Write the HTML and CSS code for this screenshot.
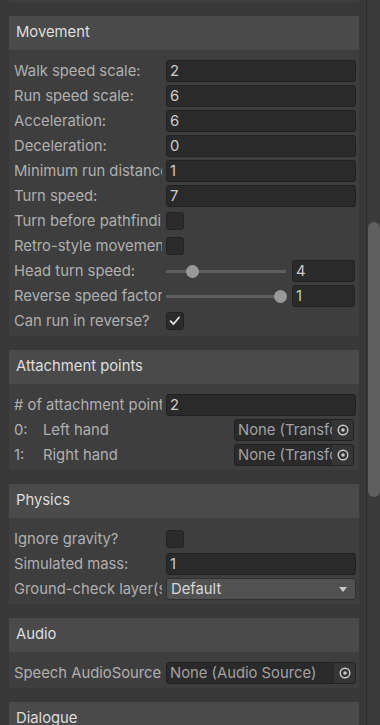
FILE: index.html
```html
<!DOCTYPE html>
<html lang="en">
<head>
    <meta charset="UTF-8">
    <meta name="viewport" content="width=device-width, initial-scale=1.0">
    <title>Character Inspector</title>
    <link rel="stylesheet" href="styles.css">
</head>
<body>
    <div class="window">
        <div class="inspector">
            <div class="panel-tail"></div>

            <div class="section">
                <div class="section-header">Movement</div>
                <div class="section-body">
                    <div class="row"><span class="label">Walk speed scale:</span><span class="field">2</span></div>
                    <div class="row"><span class="label">Run speed scale:</span><span class="field">6</span></div>
                    <div class="row"><span class="label">Acceleration:</span><span class="field">6</span></div>
                    <div class="row"><span class="label">Deceleration:</span><span class="field">0</span></div>
                    <div class="row"><span class="label">Minimum run distance:</span><span class="field">1</span></div>
                    <div class="row"><span class="label">Turn speed:</span><span class="field">7</span></div>
                    <div class="row"><span class="label">Turn before pathfinding?</span><span class="checkbox"></span></div>
                    <div class="row"><span class="label">Retro-style movement?</span><span class="checkbox"></span></div>
                    <div class="row">
                        <span class="label">Head turn speed:</span>
                        <div class="slider-wrap">
                            <div class="slider"><span class="knob" style="left: 22%"></span></div>
                            <span class="field small">4</span>
                        </div>
                    </div>
                    <div class="row">
                        <span class="label">Reverse speed factor:</span>
                        <div class="slider-wrap">
                            <div class="slider"><span class="knob" style="left: 95%"></span></div>
                            <span class="field small">1</span>
                        </div>
                    </div>
                    <div class="row">
                        <span class="label">Can run in reverse?</span>
                        <span class="checkbox checked">
                            <svg width="18" height="18" viewBox="0 0 18 18"><path d="M4.5 9.2 L7.5 12 L13 5.5" fill="none" stroke="#e6e6e6" stroke-width="1.8" stroke-linecap="round" stroke-linejoin="round"/></svg>
                        </span>
                    </div>
                </div>
            </div>

            <div class="section">
                <div class="section-header">Attachment points</div>
                <div class="section-body">
                    <div class="row"><span class="label"># of attachment points:</span><span class="field">2</span></div>
                    <div class="row point-row">
                        <span class="index">0:</span>
                        <span class="point-name">Left hand</span>
                        <span class="object-field narrow">
                            <span class="object-text">None (Transform)</span>
                            <span class="picker"><svg width="12" height="12" viewBox="0 0 12 12"><circle cx="6" cy="6" r="4.8" fill="none" stroke="#c8c8c8" stroke-width="1.4"/><circle cx="6" cy="6" r="1.8" fill="#c8c8c8"/></svg></span>
                        </span>
                    </div>
                    <div class="row point-row">
                        <span class="index">1:</span>
                        <span class="point-name">Right hand</span>
                        <span class="object-field narrow">
                            <span class="object-text">None (Transform)</span>
                            <span class="picker"><svg width="12" height="12" viewBox="0 0 12 12"><circle cx="6" cy="6" r="4.8" fill="none" stroke="#c8c8c8" stroke-width="1.4"/><circle cx="6" cy="6" r="1.8" fill="#c8c8c8"/></svg></span>
                        </span>
                    </div>
                </div>
            </div>

            <div class="section">
                <div class="section-header">Physics</div>
                <div class="section-body">
                    <div class="row"><span class="label">Ignore gravity?</span><span class="checkbox"></span></div>
                    <div class="row"><span class="label">Simulated mass:</span><span class="field">1</span></div>
                    <div class="row">
                        <span class="label">Ground-check layer(s):</span>
                        <span class="dropdown">Default<span class="arrow"></span></span>
                    </div>
                </div>
            </div>

            <div class="section">
                <div class="section-header">Audio</div>
                <div class="section-body">
                    <div class="row">
                        <span class="label">Speech AudioSource:</span>
                        <span class="object-field">
                            <span class="object-text">None (Audio Source)</span>
                            <span class="picker"><svg width="12" height="12" viewBox="0 0 12 12"><circle cx="6" cy="6" r="4.8" fill="none" stroke="#c8c8c8" stroke-width="1.4"/><circle cx="6" cy="6" r="1.8" fill="#c8c8c8"/></svg></span>
                        </span>
                    </div>
                </div>
            </div>

            <div class="section">
                <div class="section-header">Dialogue</div>
                <div class="section-body"></div>
            </div>
        </div>

        <div class="scrollbar">
            <div class="thumb"></div>
        </div>
    </div>
</body>
</html>
```

FILE: styles.css
```css
body {
    margin: 0;
    padding: 0;
    background: #383838;
    font-family: Inter, "Noto Sans", sans-serif;
    font-size: 14.8px;
    color: #b0b0b0;
}
.window {
    display: flex;
    height: 725px;
    overflow: hidden;
}
.inspector {
    flex: 1;
    padding: 0 7px 0 9px;
}
.panel-tail {
    height: 3px;
    background: #3e3e3e;
}
.section {
    margin-top: 13px;
}
.section + .section {
    margin-top: 14px;
}
.section-header {
    height: 34px;
    line-height: 33px;
    padding-left: 7px;
    background: #4a4a4a;
    color: #dedede;
}
.section-body {
    background: #3e3e3e;
    padding: 10px 3px 1px 5px;
}
.row {
    display: grid;
    grid-template-columns: 152px 1fr;
    align-items: center;
    height: 22px;
    margin-bottom: 3px;
}
.label {
    white-space: nowrap;
    overflow: hidden;
    line-height: 22px;
    margin-right: 4px;
}
.field {
    height: 20px;
    line-height: 20px;
    padding-left: 3px;
    background: #2a2a2a;
    border: 1px solid #212121;
    border-radius: 3px;
    color: #cccccc;
}
.checkbox {
    display: block;
    width: 16px;
    height: 16px;
    background: #2b2b2b;
    border: 1px solid #222222;
    border-radius: 3px;
    position: relative;
}
.checkbox svg {
    position: absolute;
    left: -1px;
    top: -1px;
}
.slider-wrap {
    display: flex;
    align-items: center;
    gap: 6px;
}
.slider {
    flex: 1;
    height: 3px;
    background: #5e5e5e;
    position: relative;
}
.knob {
    position: absolute;
    top: -5px;
    width: 13px;
    height: 13px;
    margin-left: -6px;
    border-radius: 50%;
    background: #999999;
}
.field.small {
    width: 58px;
    flex: none;
    margin-right: 1px;
}
.point-row {
    grid-template-columns: 29px 1fr 122px;
}
.index, .point-name {
    line-height: 22px;
}
.object-field {
    display: flex;
    height: 20px;
    background: #2a2a2a;
    border: 1px solid #212121;
    border-radius: 3px;
    overflow: hidden;
}
.object-field.narrow {
    margin-right: 2px;
}
.object-text {
    flex: 1;
    white-space: nowrap;
    overflow: hidden;
    padding-left: 3px;
    line-height: 20px;
    color: #a2a2a2;
}
.picker {
    flex: none;
    width: 21px;
    display: flex;
    align-items: center;
    justify-content: center;
    background: #353535;
}
.dropdown {
    position: relative;
    height: 20px;
    line-height: 20px;
    padding-left: 4px;
    background: #515151;
    border: 1px solid #303030;
    border-radius: 3px;
    color: #d6d6d6;
}
.dropdown .arrow {
    position: absolute;
    right: 8px;
    top: 8px;
    border-left: 4px solid transparent;
    border-right: 4px solid transparent;
    border-top: 5px solid #c8c8c8;
}
.scrollbar {
    width: 14px;
    flex: none;
    background: #3a3a3a;
    border-left: 1px solid #2c2c2c;
    padding: 222px 0 0 1px;
    box-sizing: border-box;
}
.thumb {
    height: 275px;
    background: #5f5f5f;
    border-radius: 6px;
}
```
